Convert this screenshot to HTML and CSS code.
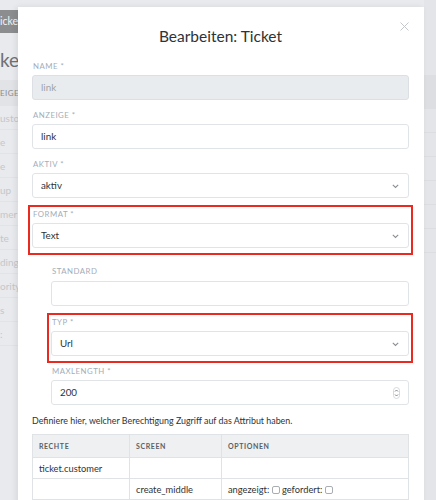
FILE: index.html
```html
<!DOCTYPE html>
<html lang="de">
<head>
    <meta charset="UTF-8">
    <meta name="viewport" content="width=device-width, initial-scale=1.0">
    <title>Bearbeiten: Ticket</title>
    <link rel="stylesheet" href="styles.css">
</head>
<body>
    <div class="page">
        <aside class="side">
            <div class="side-tab">icket</div>
            <h1 class="side-title">ket</h1>
            <div class="side-head">EIGE</div>
            <div class="side-row">ustome</div>
            <div class="side-row">e</div>
            <div class="side-row">e</div>
            <div class="side-row">up</div>
            <div class="side-row">mer</div>
            <div class="side-row">te</div>
            <div class="side-row">ding</div>
            <div class="side-row">ority</div>
            <div class="side-row">s</div>
            <div class="side-row">:</div>
        </aside>
        <div class="right-strip">
            <div class="strip-head"></div>
            <div class="strip-row"></div>
            <div class="strip-row"></div>
            <div class="strip-row"></div>
            <div class="strip-row"></div>
            <div class="strip-row"></div>
            <div class="strip-row"></div>
        </div>
    </div>

    <div class="modal">
        <div class="modal-head">
            <h2>Bearbeiten: Ticket</h2>
            <svg class="close" width="9" height="9" viewBox="0 0 9 9"><path d="M0.5 0.5l8 8M8.5 0.5l-8 8" stroke="#c3c7cb" stroke-width="1"/></svg>
        </div>

        <div class="field">
            <label>Name *</label>
            <div class="input disabled">link</div>
        </div>
        <div class="field">
            <label>Anzeige *</label>
            <div class="input">link</div>
        </div>
        <div class="field">
            <label>Aktiv *</label>
            <div class="input select">aktiv
                <svg class="chev" width="7" height="5" viewBox="0 0 7 5"><path d="M0.8 0.8l2.7 2.7 2.7-2.7" fill="none" stroke="#8a8f95" stroke-width="1.1"/></svg>
            </div>
        </div>
        <div class="field marked">
            <label>Format *</label>
            <div class="input select">Text
                <svg class="chev" width="7" height="5" viewBox="0 0 7 5"><path d="M0.8 0.8l2.7 2.7 2.7-2.7" fill="none" stroke="#8a8f95" stroke-width="1.1"/></svg>
            </div>
        </div>

        <div class="sub">
            <div class="field">
                <label>Standard</label>
                <div class="input"></div>
            </div>
            <div class="field marked">
                <label>Typ *</label>
                <div class="input select">Url
                    <svg class="chev" width="7" height="5" viewBox="0 0 7 5"><path d="M0.8 0.8l2.7 2.7 2.7-2.7" fill="none" stroke="#8a8f95" stroke-width="1.1"/></svg>
                </div>
            </div>
            <div class="field">
                <label>Maxlength *</label>
                <div class="input select">200
                    <svg class="spin" width="7" height="12" viewBox="0 0 7 12"><rect x="0.5" y="0.5" width="6" height="11" rx="3" fill="none" stroke="#d5d8dc"/><path d="M2 4.5l1.5-1.5L5 4.5M2 7.5l1.5 1.5L5 7.5" fill="none" stroke="#7d8288" stroke-width="1"/></svg>
                </div>
            </div>
        </div>

        <p class="hint">Definiere hier, welcher Berechtigung Zugriff auf das Attribut haben.</p>

        <table class="perms">
            <tr>
                <th class="c1">Rechte</th>
                <th class="c2">Screen</th>
                <th>Optionen</th>
            </tr>
            <tr>
                <td>ticket.customer</td>
                <td></td>
                <td></td>
            </tr>
            <tr>
                <td></td>
                <td>create_middle</td>
                <td>angezeigt: <span class="box"></span> gefordert: <span class="box"></span></td>
            </tr>
        </table>
    </div>
</body>
</html>
```

FILE: styles.css
```css
* {
    box-sizing: border-box;
}
body {
    margin: 0;
    font-family: "Lato", "Open Sans", sans-serif;
    background: #e9eaed;
    width: 436px;
    height: 500px;
    overflow: hidden;
    position: relative;
}

/* faded page behind the dialog */
.page {
    display: flex;
    justify-content: space-between;
    height: 500px;
}
.side {
    width: 18px;
    overflow: hidden;
    white-space: nowrap;
    padding-top: 10px;
}
.side-tab {
    background: #8c8d8f;
    color: #f2f2f2;
    font-size: 10.5px;
    height: 23px;
    line-height: 23px;
}
.side-title {
    margin: 13px 0 0;
    font-size: 19px;
    font-weight: normal;
    color: #6f7174;
    height: 34px;
    line-height: 28px;
}
.side-head {
    font-size: 8px;
    letter-spacing: 0.4px;
    color: #8a8d91;
    background: #e1e3e6;
    height: 26px;
    line-height: 26px;
}
.side-row {
    font-size: 10px;
    color: #c4c7cb;
    height: 24px;
    line-height: 24px;
    border-bottom: 1px solid #e2e3e6;
}
.right-strip {
    width: 12px;
    padding-top: 75px;
    background: #e4e5e8;
}
.strip-head {
    height: 34px;
    background: #dcdee2;
}
.strip-row {
    height: 24px;
    border-bottom: 1px solid #dcdde1;
}

/* dialog */
.modal {
    position: absolute;
    left: 18px;
    top: 7px;
    width: 406px;
    height: 520px;
    background: #fff;
    padding: 0 15px 0 14px;
    box-shadow: -2px 0 6px rgba(0, 0, 0, 0.08);
}
.modal-head {
    position: relative;
    height: 53px;
    padding-top: 20px;
}
.modal-head h2 {
    margin: 0;
    text-align: center;
    font-size: 15.5px;
    font-weight: normal;
    color: #2f3236;
    line-height: 19px;
}
.close {
    position: absolute;
    right: 0;
    top: 15px;
}

.field {
    margin-bottom: 9px;
}
.field label {
    display: block;
    font-size: 7.8px;
    line-height: 12px;
    letter-spacing: 0.5px;
    text-transform: uppercase;
    color: #a2adb9;
    margin-bottom: 3px;
    padding-left: 1px;
}
.input {
    position: relative;
    height: 25px;
    border: 1px solid #e1e4e7;
    border-radius: 3px;
    padding-left: 8px;
    font-size: 9.8px;
    line-height: 23px;
    color: #2f3236;
}
.input.disabled {
    background: #e9ecef;
    border-color: #dcdfe3;
    color: #9ea3a8;
}
.chev {
    position: absolute;
    right: 9px;
    top: 10px;
}
.spin {
    position: absolute;
    right: 8px;
    top: 6px;
}

.marked {
    border: 2px solid #ea2a21;
    margin: -2px -4px 7px;
    padding: 1px 2px 5px;
}

.sub {
    padding-left: 19px;
}
.sub .field:first-child {
    margin-top: 10px;
}
.sub .field:first-child label {
    margin-bottom: 4px;
}
.sub .marked {
    margin-bottom: 2px;
}

.hint {
    margin: 9px 0 6px;
    font-size: 8.9px;
    line-height: 14px;
    color: #2f3236;
}

.perms {
    width: 100%;
    border-collapse: collapse;
    font-size: 9.3px;
    color: #2f3236;
}
.perms th,
.perms td {
    border: 1px solid #dfe3e6;
    text-align: left;
    padding: 0 7px 0 6px;
    height: 21px;
}
.perms th {
    background: #eef0f2;
    height: 23px;
    font-size: 7px;
    font-weight: bold;
    letter-spacing: 0.6px;
    text-transform: uppercase;
    color: #5a5f65;
}
.perms .c1 {
    width: 97px;
}
.perms .c2 {
    width: 92px;
}
.box {
    display: inline-block;
    width: 8px;
    height: 8px;
    border: 1px solid #a9adb2;
    border-radius: 2px;
    vertical-align: -1px;
}
```
